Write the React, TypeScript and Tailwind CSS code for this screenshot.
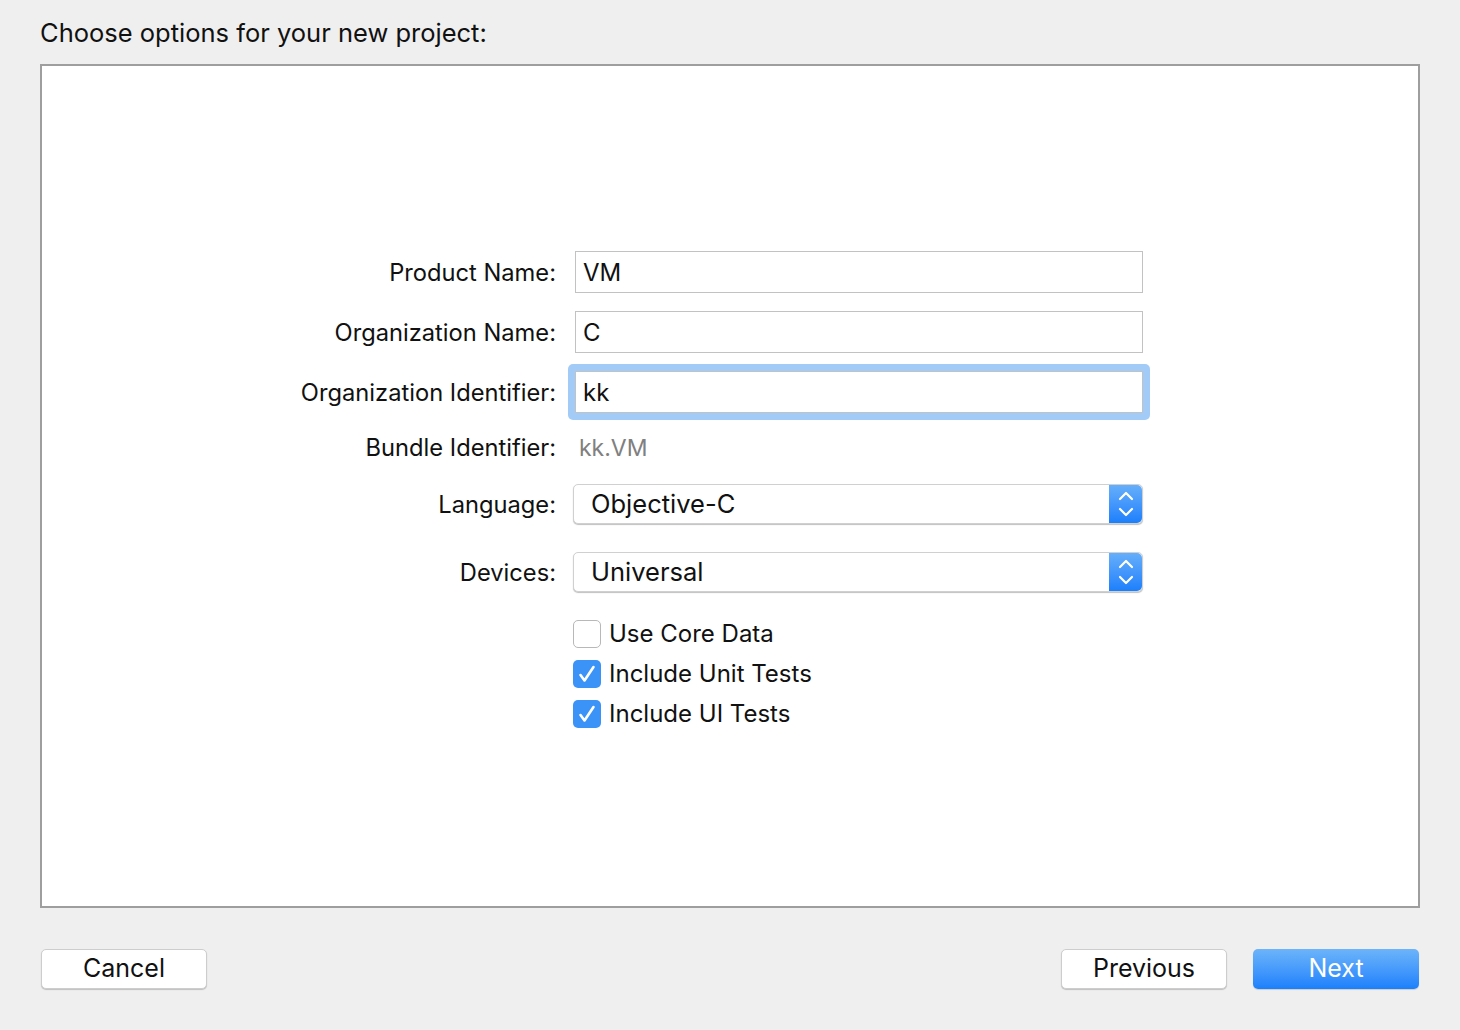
import React from "react";

const FONT = { fontFamily: "Inter, 'Open Sans', 'Liberation Sans', sans-serif" };

function Label({ children }: { children: React.ReactNode }) {
  return (
    <div className="w-[514px] shrink-0 pt-[2px] text-right text-[23.7px] text-[#111]">
      {children}
    </div>
  );
}

function TextField({ value, focused }: { value: string; focused?: boolean }) {
  const field = (
    <div className="flex h-[42px] w-[568px] items-center border border-[#c2c2c2] bg-white px-[7px] pt-[2px] text-[24px] text-[#111]">
      {value}
    </div>
  );
  if (!focused) return <div className="ml-[2px]">{field}</div>;
  return (
    <div className="-my-[7px] ml-[-5px] rounded-[5px] bg-[#a2cbf7] p-[7px]">{field}</div>
  );
}

function Stepper() {
  return (
    <div className="flex h-full w-[33px] items-center justify-center rounded-r-[5px] bg-gradient-to-b from-[#65aefa] to-[#1b7ffb]">
      <svg width="20" height="34" viewBox="0 0 20 34" fill="none" stroke="white" strokeWidth="2.2" strokeLinecap="round" strokeLinejoin="round">
        <path d="M4 12 L10 6 L16 12" />
        <path d="M4 22 L10 28 L16 22" />
      </svg>
    </div>
  );
}

function Popup({ value }: { value: string }) {
  return (
    <div className="flex h-[40px] w-[570px] items-center rounded-[5px] border border-[#d0d0d0] bg-white shadow-[0_1px_1px_rgba(0,0,0,0.25)]">
      <div className="flex-1 pl-[17px] pt-[1px] text-[25.5px] text-[#111]">{value}</div>
      <Stepper />
    </div>
  );
}

function Checkbox({ checked, label }: { checked?: boolean; label: string }) {
  return (
    <div className="flex h-[28px] items-center">
      {checked ? (
        <div className="flex h-[28px] w-[28px] items-center justify-center rounded-[5px] bg-[#3b93f7]">
          <svg width="28" height="28" viewBox="0 0 28 28" fill="none" stroke="white" strokeWidth="2.6" strokeLinecap="round" strokeLinejoin="round">
            <path d="M7.5 15 L11.5 20.5 L20.5 7" />
          </svg>
        </div>
      ) : (
        <div className="h-[28px] w-[28px] rounded-[5px] border border-[#b8b8b8] bg-white" />
      )}
      <span className="ml-[8px] text-[24px] text-[#111]">{label}</span>
    </div>
  );
}

function Button({ children, primary }: { children: React.ReactNode; primary?: boolean }) {
  return (
    <button
      className={
        primary
          ? "flex h-[40px] w-[166px] items-center justify-center rounded-[5px] bg-gradient-to-b from-[#6cb4fa] to-[#1a80fb] text-[25px] text-white shadow-[0_1px_1px_rgba(0,0,0,0.15)]"
          : "flex h-[40px] w-[166px] items-center justify-center rounded-[5px] border border-[#cdcdcd] bg-white text-[25px] text-[#111] shadow-[0_1px_1px_rgba(0,0,0,0.2)]"
      }
    >
      {children}
    </button>
  );
}

export default function App() {
  return (
    <div className="h-[1030px] w-[1460px] bg-[#efefef] px-[40px]" style={FONT}>
      <div className="flex h-[64px] items-center pt-[2px] text-[25.5px] text-[#111]">
        Choose options for your new project:
      </div>

      <div className="h-[844px] border-2 border-[#9e9e9e] bg-white pt-[185px]">
        <div className="flex items-center">
          <Label>Product Name:</Label>
          <div className="ml-[17px]">
            <TextField value="VM" />
          </div>
        </div>
        <div className="mt-[18px] flex items-center">
          <Label>Organization Name:</Label>
          <div className="ml-[17px]">
            <TextField value="C" />
          </div>
        </div>
        <div className="mt-[18px] flex items-center">
          <Label>Organization Identifier:</Label>
          <div className="ml-[17px]">
            <TextField value="kk" focused />
          </div>
        </div>
        <div className="mt-[14px] flex h-[40px] items-center">
          <Label>Bundle Identifier:</Label>
          <div className="ml-[23px] pt-[2px] text-[23px] text-[#808080]">kk.VM</div>
        </div>
        <div className="mt-[17px] flex items-center">
          <Label>Language:</Label>
          <div className="ml-[17px]">
            <Popup value="Objective-C" />
          </div>
        </div>
        <div className="mt-[28px] flex items-center">
          <Label>Devices:</Label>
          <div className="ml-[17px]">
            <Popup value="Universal" />
          </div>
        </div>
        <div className="ml-[531px] mt-[28px] flex flex-col gap-[12px]">
          <Checkbox label="Use Core Data" />
          <Checkbox checked label="Include Unit Tests" />
          <Checkbox checked label="Include UI Tests" />
        </div>
      </div>

      <div className="mt-[41px] flex items-center px-[1px]">
        <Button>Cancel</Button>
        <div className="flex-1" />
        <Button>Previous</Button>
        <div className="w-[26px]" />
        <Button primary>Next</Button>
      </div>
    </div>
  );
}
